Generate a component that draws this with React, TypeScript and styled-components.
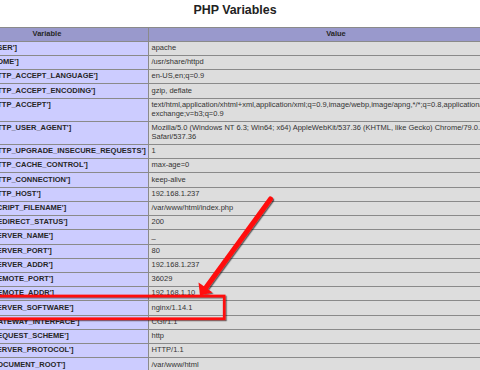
import React from 'react';
import styled, { createGlobalStyle } from 'styled-components';

type Entry = {
    name: string;
    value: string[];
};

const entries: Entry[] = [
    { name: 'USER', value: ['apache'] },
    { name: 'HOME', value: ['/usr/share/httpd'] },
    { name: 'HTTP_ACCEPT_LANGUAGE', value: ['en-US,en;q=0.9'] },
    { name: 'HTTP_ACCEPT_ENCODING', value: ['gzip, deflate'] },
    {
        name: 'HTTP_ACCEPT',
        value: [
            'text/html,application/xhtml+xml,application/xml;q=0.9,image/webp,image/apng,*/*;q=0.8,application/signed-',
            'exchange;v=b3;q=0.9'
        ]
    },
    {
        name: 'HTTP_USER_AGENT',
        value: [
            'Mozilla/5.0 (Windows NT 6.3; Win64; x64) AppleWebKit/537.36 (KHTML, like Gecko) Chrome/79.0.3945.88',
            'Safari/537.36'
        ]
    },
    { name: 'HTTP_UPGRADE_INSECURE_REQUESTS', value: ['1'] },
    { name: 'HTTP_CACHE_CONTROL', value: ['max-age=0'] },
    { name: 'HTTP_CONNECTION', value: ['keep-alive'] },
    { name: 'HTTP_HOST', value: ['192.168.1.237'] },
    { name: 'SCRIPT_FILENAME', value: ['/var/www/html/index.php'] },
    { name: 'REDIRECT_STATUS', value: ['200'] },
    { name: 'SERVER_NAME', value: ['_'] },
    { name: 'SERVER_PORT', value: ['80'] },
    { name: 'SERVER_ADDR', value: ['192.168.1.237'] },
    { name: 'REMOTE_PORT', value: ['36029'] },
    { name: 'REMOTE_ADDR', value: ['192.168.1.10'] },
    { name: 'SERVER_SOFTWARE', value: ['nginx/1.14.1'] },
    { name: 'GATEWAY_INTERFACE', value: ['CGI/1.1'] },
    { name: 'REQUEST_SCHEME', value: ['http'] },
    { name: 'SERVER_PROTOCOL', value: ['HTTP/1.1'] },
    { name: 'DOCUMENT_ROOT', value: ['/var/www/html'] }
];

const lineColor = '#8a8a8a';

const GlobalStyle = createGlobalStyle`
    html, body {
        margin: 0;
        padding: 0;
        background: #ffffff;
    }

    body {
        font-family: "Liberation Sans", Arial, sans-serif;
        color: #222222;
    }
`;

const Viewport = styled.div`
    position: relative;
    width: 480px;
    height: 370px;
    overflow: hidden;
    background: #ffffff;
`;

const Sheet = styled.div`
    width: 580px;
    margin-left: -55px;
`;

const Title = styled.h2`
    margin: 0;
    padding-top: 2px;
    height: 16px;
    line-height: 16px;
    font-size: 12.4px;
    font-weight: bold;
    text-align: center;
    color: #222222;
`;

const Table = styled.div`
    margin-top: 8.5px;
    border-top: 1px solid ${lineColor};
    border-left: 1px solid ${lineColor};
`;

const Row = styled.div`
    display: flex;
    border-bottom: 1px solid ${lineColor};
`;

const Cell = styled.div`
    box-sizing: border-box;
    padding: 2.2px 2.5px;
    font-size: 7.5px;
    line-height: 8.86px;
    white-space: nowrap;
    overflow: hidden;
`;

const NameCell = styled(Cell)<{ $head?: boolean }>`
    flex: 0 0 203px;
    border-right: 1px solid ${lineColor};
    background: ${p => (p.$head ? '#9999cc' : '#ccccff')};
    font-weight: bold;
    color: #262626;
    text-align: ${p => (p.$head ? 'center' : 'left')};
`;

const ValueCell = styled(Cell)<{ $head?: boolean }>`
    flex: 0 0 375px;
    border-right: 1px solid ${lineColor};
    background: ${p => (p.$head ? '#9999cc' : '#dddddd')};
    font-weight: ${p => (p.$head ? 'bold' : 'normal')};
    color: ${p => (p.$head ? '#262626' : '#333333')};
    text-align: ${p => (p.$head ? 'center' : 'left')};
`;

const ValueLine = styled.div``;

const Overlay = styled.svg`
    position: absolute;
    left: 0;
    top: 0;
    width: 480px;
    height: 370px;
    pointer-events: none;
`;

const red = '#ff0d0d';

const Callout = () => (
    <Overlay viewBox='0 0 480 370'>
        <defs>
            <filter id='callout-shadow' filterUnits='userSpaceOnUse' x='-30' y='180' width='340' height='170'>
                <feDropShadow dx='1.2' dy='1.2' stdDeviation='0.7' floodColor='#000' floodOpacity='0.55' />
            </filter>
        </defs>
        <g filter='url(#callout-shadow)'>
            <rect x='-10' y='296' width='234.2' height='22.7' fill='none' stroke={ red } strokeWidth='2.7' />
            <line x1='270.5' y1='199' x2='206' y2='287.5' stroke={ red } strokeWidth='5' strokeLinecap='round' />
            <polygon points='200,295.5 198.5,282.5 212.5,292.5' fill={ red } />
        </g>
    </Overlay>
);

export default function App() {
    return (
        <Viewport>
            <GlobalStyle />
            <Sheet>
                <Title>PHP Variables</Title>
                <Table>
                    <Row>
                        <NameCell $head>Variable</NameCell>
                        <ValueCell $head>Value</ValueCell>
                    </Row>
                    {
                        entries.map(entry => (
                            <Row key={ entry.name }>
                                <NameCell>$_SERVER['{ entry.name }']</NameCell>
                                <ValueCell>
                                    { entry.value.map(line => <ValueLine key={ line }>{ line }</ValueLine>) }
                                </ValueCell>
                            </Row>
                        ))
                    }
                </Table>
            </Sheet>
            <Callout />
        </Viewport>
    );
}
